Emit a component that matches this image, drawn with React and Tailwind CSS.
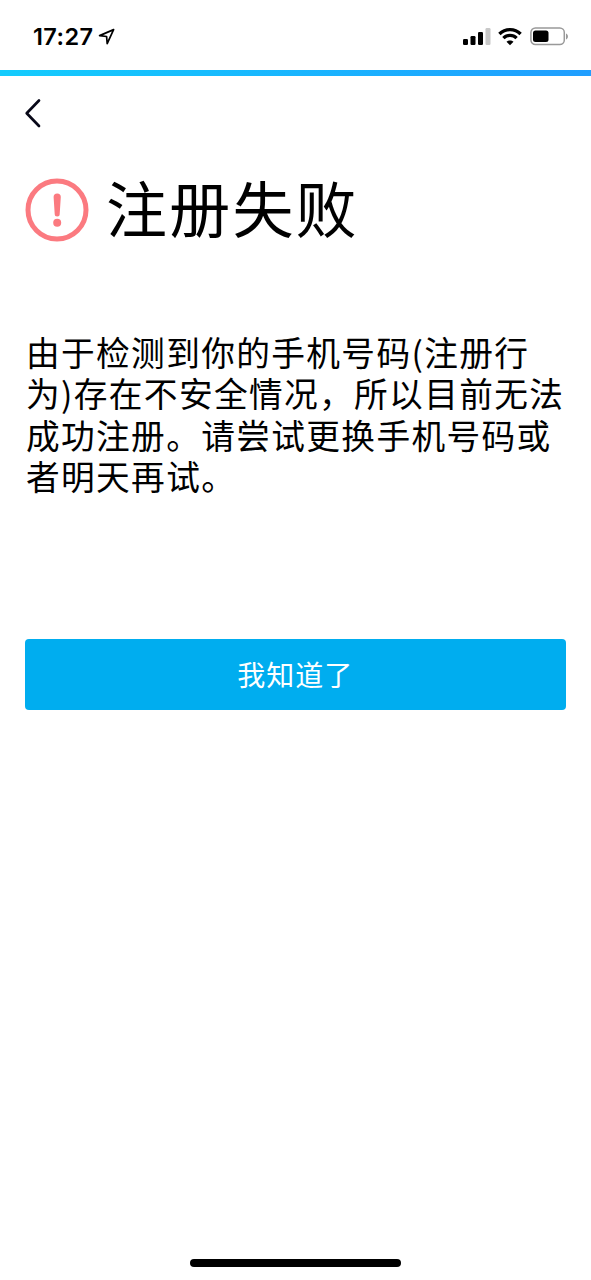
const messageLines = [
  '由于检测到你的手机号码(注册行',
  '为)存在不安全情况，所以目前无法',
  '成功注册。请尝试更换手机号码或',
  '者明天再试。',
];

const StatusBar = () => (
  <div className="flex h-[69.5px] shrink-0 items-start justify-between pl-[33px] pr-[22px]">
    <div className="flex items-center pt-[22px]">
      <span className="w-[61px] font-['Inter','Liberation_Sans',sans-serif] text-[23.5px] font-semibold leading-[30px] tracking-[0.4px]">
        17:27
      </span>
      <svg className="ml-1 h-[18px] w-[18px]" viewBox="0 0 18 18" fill="none">
        <path d="M15.6 1.6 1.6 7.6l7 .9.6 7.2z" stroke="black" strokeWidth="1.7" strokeLinejoin="round" />
      </svg>
    </div>

    <div className="flex items-start pt-[27px]">
      {/* Signal */}
      <svg className="h-[19px] w-[28px]" viewBox="0 0 28 19">
        <rect x="0" y="12" width="5" height="6" rx="1.2" />
        <rect x="7.5" y="9" width="5" height="9" rx="1.2" />
        <rect x="15" y="5" width="5" height="13" rx="1.2" />
        <rect x="22.5" y="1" width="5" height="17" rx="1.2" fill="#c8c8c8" />
      </svg>
      {/* Wifi */}
      <svg className="ml-[7px] h-[19px] w-[24px]" viewBox="0 0 24 19" fill="none" stroke="black" strokeWidth="3.3">
        <path d="M1.4 7C7.2 1.1 16.8 1.1 22.6 7" />
        <path d="M5.4 11.1c3.6-3.6 9.6-3.6 13.2 0" />
        <path d="M12 18.2 8.5 14.8c1.9-1.7 5.1-1.7 7 0z" fill="black" stroke="none" />
      </svg>
      {/* Battery */}
      <svg className="ml-[8px] h-[19px] w-[39px]" viewBox="0 0 39 19">
        <rect x="0.9" y="1" width="33.4" height="16.6" rx="4.5" fill="none" stroke="#999" strokeWidth="1.5" />
        <rect x="3" y="3.5" width="15.5" height="11.6" rx="2.5" />
        <path d="M36 6.4c2.6 1 2.6 5 0 6z" fill="#999" />
      </svg>
    </div>
  </div>
);

const App = () => {
  return (
    <div className="flex h-[1280px] w-[591px] flex-col overflow-hidden bg-white font-['Noto_Sans_CJK_SC',sans-serif] text-black">
      <StatusBar />
      <div className="mb-[0.5px] h-1.5 shrink-0 bg-linear-to-r from-[#14ccfd] to-[#209eff]" />

      <button type="button" aria-label="返回" className="ml-[24px] mt-[22px] h-[30px] w-[18px]">
        <svg className="h-[30px] w-[18px]" viewBox="0 0 18 30" fill="none">
          <path d="M15 2.5 2.7 15.3 15 28" stroke="#080818" strokeWidth="2.7" strokeLinecap="round" strokeLinejoin="round" />
        </svg>
      </button>

      <main className="flex flex-col px-[25px]">
        <div className="mt-[34px] flex h-[96px] items-start">
          <svg className="mt-4 h-[64px] w-[64px] shrink-0" viewBox="0 0 64 64">
            <circle cx="32" cy="32" r="29" fill="none" stroke="#fb7a80" strokeWidth="5" />
            <path d="M28.6 19a3.6 3.6 0 0 1 7.2 0l-1.1 17.1a2.5 2.5 0 0 1-5 0z" fill="#fb7a80" />
            <circle cx="32.2" cy="44.8" r="4" fill="#fb7a80" />
          </svg>
          <h1 className="ml-[17px] whitespace-nowrap text-[61px] leading-[90px] tracking-[2.2px]">注册失败</h1>
        </div>

        <p className="ml-px mt-[73px] whitespace-nowrap text-[33.7px] leading-[41.3px] tracking-[1.35px]">
          {messageLines.map((line) => (
            <span key={line} className="block">{line}</span>
          ))}
        </p>

        <button
          type="button"
          className="mt-[143px] h-[71px] w-[540.5px] rounded-[4px] bg-[#00adef] text-[28px] leading-[71px] tracking-[1px] text-white"
        >
          我知道了
        </button>
      </main>

      <div className="mx-auto mb-[13px] mt-auto h-2 w-[211px] rounded-full bg-black" />
    </div>
  );
};

export default App;
